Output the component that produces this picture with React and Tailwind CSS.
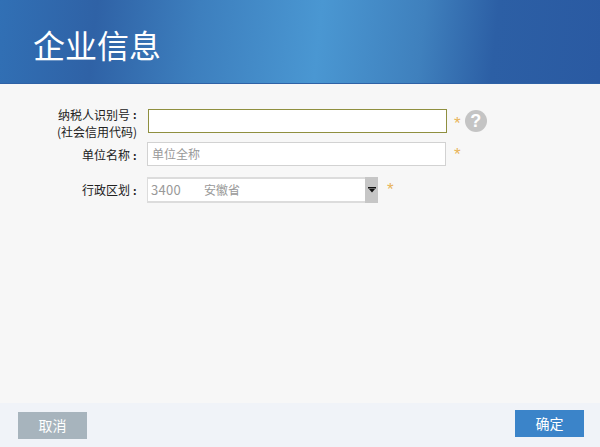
function Star({ className }) {
  return <span className={`text-[#e8b45a] text-[17px] leading-none font-['Liberation_Sans',sans-serif] ${className}`}>*</span>;
}

function Label({ children, className }) {
  return (
    <label className={`w-[140px] shrink-0 flex justify-end text-right ${className}`}>
      <span>{children}</span>
      <span className="w-[7px] text-left ml-[3px] font-bold text-[11px]">:</span>
    </label>
  );
}

export default function App() {
  return (
    <div className="w-[600px] h-[447px] flex flex-col overflow-hidden bg-[#f7f7f7] font-['Noto_Sans_CJK_SC','Liberation_Sans',sans-serif]">
      <header className="h-[84px] shrink-0 flex items-center pl-[33px] border-b border-b-[#2f62a6] bg-[linear-gradient(96deg,#3170b5_0%,#2f62a6_16%,#3d7fbe_33%,#4a97d2_53%,#3f80bd_70%,#2c5fa5_82%,#2a5aa2_100%)]">
        <h1 className="text-[32px] leading-none text-white pt-[5px]">企业信息</h1>
      </header>
      <main className="flex-1 flex flex-col pt-[25px] text-[12px] text-[#222]">
        <div className="flex items-start h-[32px]">
          <div className="w-[140px] shrink-0 text-right leading-[17px] -mt-[3px]">
            <Label className="leading-[17px]">纳税人识别号</Label>
            <div className="pr-[3px]">(社会信用代码)</div>
          </div>
          <div className="ml-[8px] w-[299px] h-[24px] bg-white border border-[#8f8f3f]" />
          <Star className="ml-[7px] mt-[6px]" />
          <span className="ml-[4px] mt-[1px] w-[22px] h-[22px] rounded-full bg-[#c4c4c4] text-white font-bold text-[18px] leading-[22px] text-center font-['Liberation_Sans',sans-serif]">?</span>
        </div>
        <div className="flex items-start h-[30px] mt-[1px]">
          <Label className="leading-[24px] pt-[1px]">单位名称</Label>
          <div className="ml-[7px] w-[299px] h-[24px] bg-white border border-[#d2d2d2] pl-[4px] leading-[22px] text-[#999]">单位全称</div>
          <Star className="ml-[8px] mt-[4px]" />
        </div>
        <div className="flex items-start mt-[5px]">
          <Label className="leading-[26px]">行政区划</Label>
          <div className="ml-[7px] w-[231px] h-[26px] flex bg-white border-2 border-[#dcdcdc] border-r-0 border-l">
            <div className="flex-1 flex pl-[3px] leading-[22px] text-[#999]">
              <span className="w-[53px] text-[13px] tracking-[0.3px]">3400</span>
              <span>安徽省</span>
            </div>
            <div className="w-[13px] -my-[2px] bg-[#c6c6c6] flex items-center justify-center">
              <svg width="8" height="6" viewBox="0 0 8 6"><path d="M0 0h8v1.5H0zM1 2h6L4 5.5z" fill="#111" /></svg>
            </div>
          </div>
          <Star className="ml-[9px] mt-[4px]" />
        </div>
      </main>
      <footer className="h-[44px] shrink-0 bg-[#f0f3f8] flex justify-between pl-[18px] pr-[16px]">
        <button className="mt-[9px] w-[69px] h-[27px] bg-[#a7b4bd] text-white text-[14px]">取消</button>
        <button className="mt-[7px] w-[69px] h-[27px] bg-[#3b84c9] text-white text-[14px]">确定</button>
      </footer>
    </div>
  );
}
